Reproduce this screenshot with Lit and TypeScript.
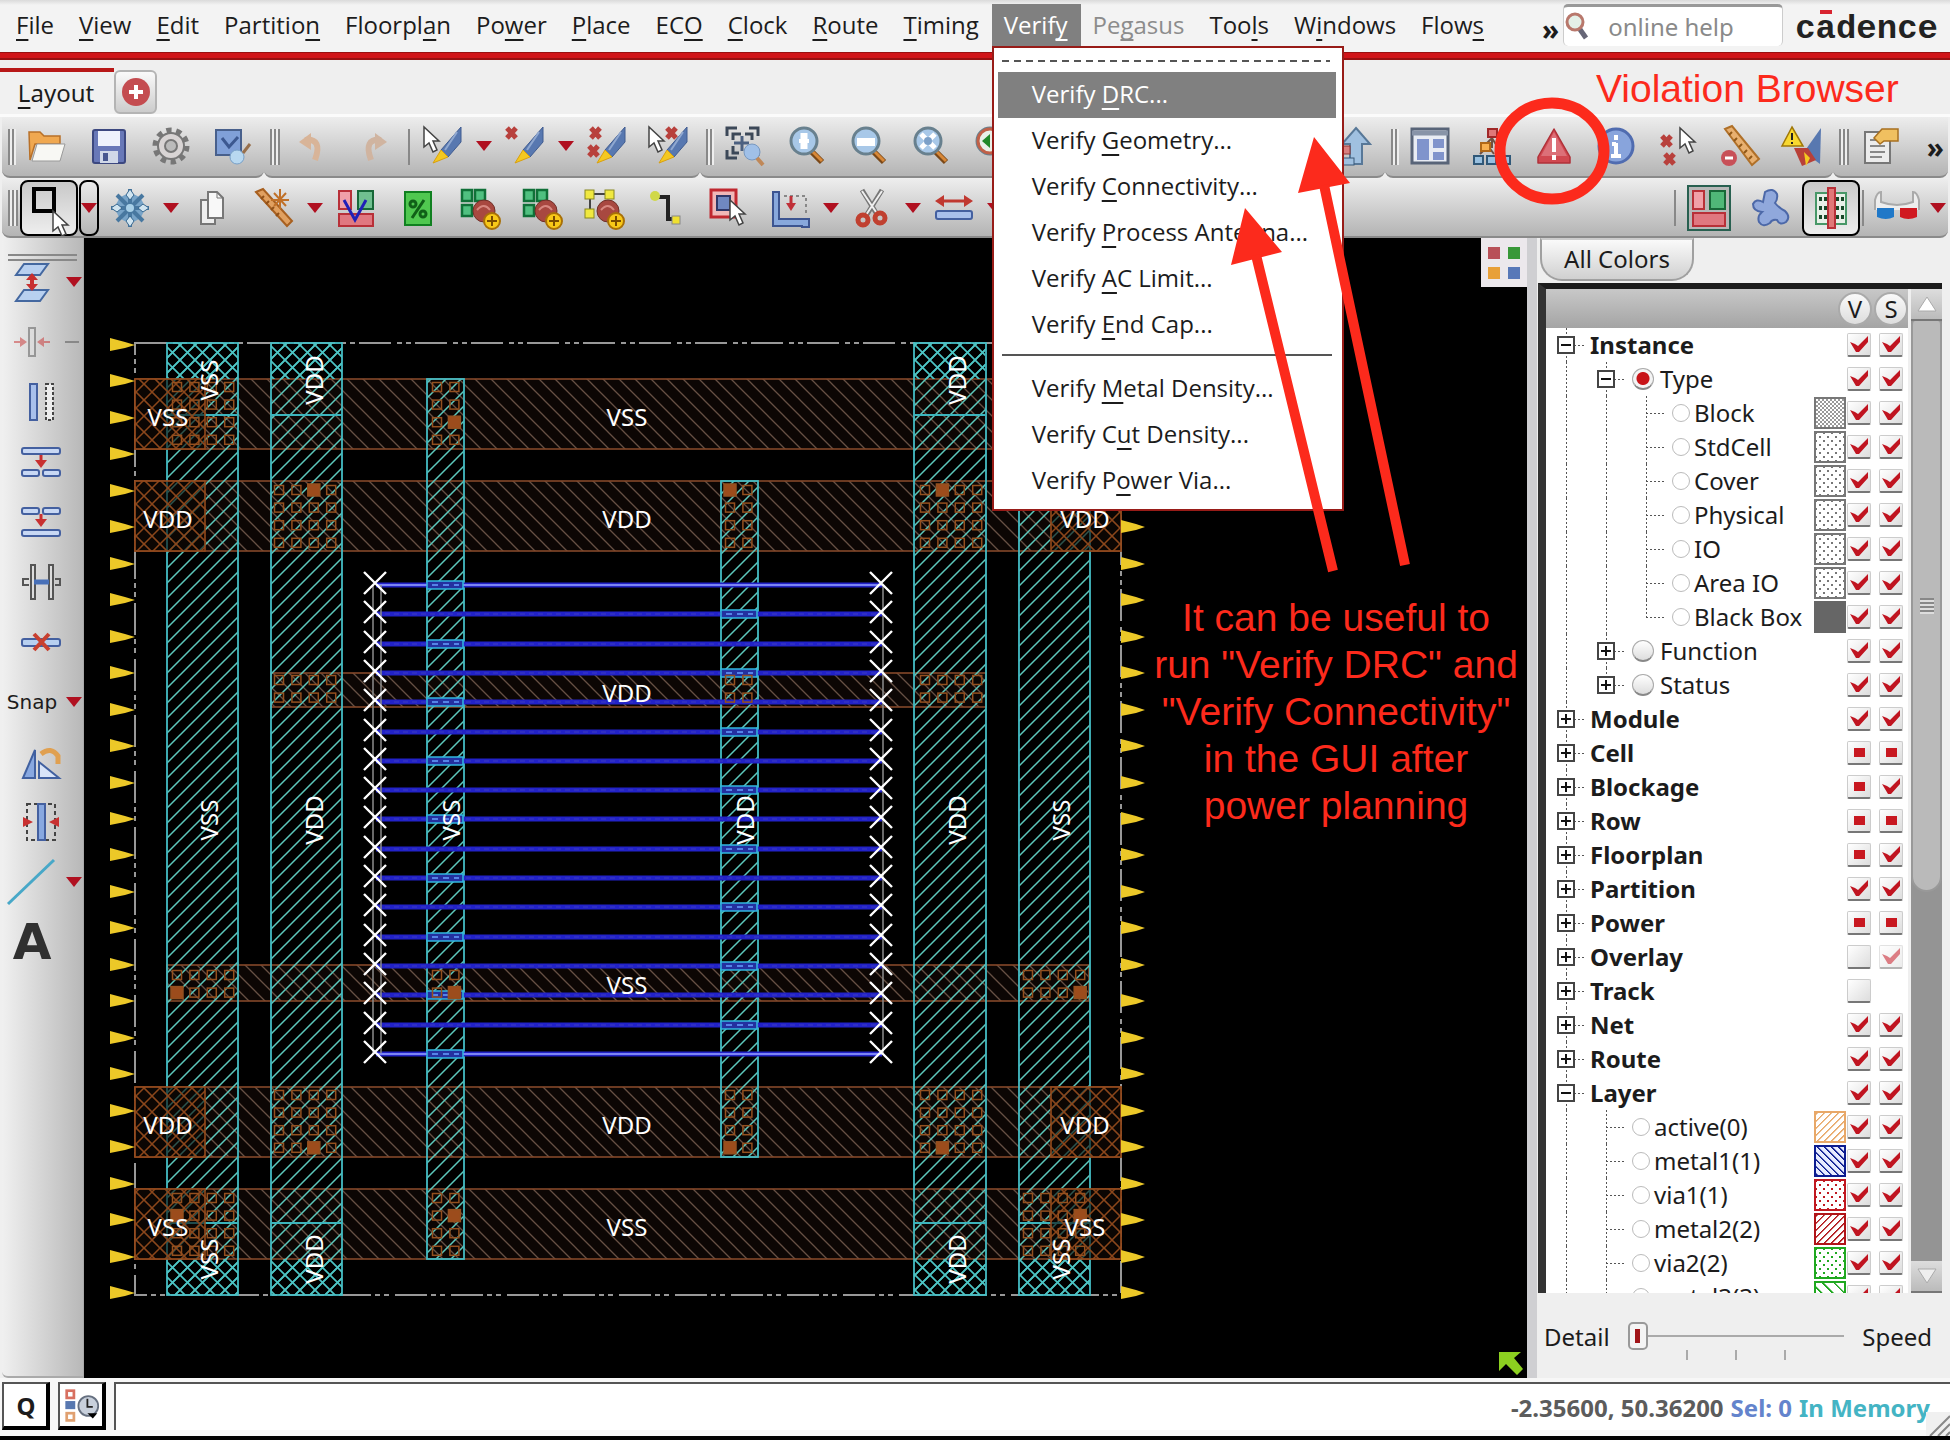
import { LitElement, html, svg, css, nothing } from "lit";
import type { SVGTemplateResult, TemplateResult } from "lit";
import { customElement, state } from "lit/decorators.js";
import { classMap } from "lit/directives/class-map.js";

/* ---------- data ---------- */

/** A "_" stands before the mnemonic letter. */
const MENUS = [
  "_File", "_View", "_Edit", "Partitio_n", "Floorpl_an", "Po_wer", "_Place", "EC_O",
  "_Clock", "_Route", "_Timing", "Verif_y", "Pe_gasus", "Too_ls", "W_indows", "Flow_s",
];

const VERIFY_TOP = [
  "Verify _DRC...", "Verify _Geometry...", "Verify _Connectivity...",
  "Verify _Process Antenna...", "Verify _AC Limit...", "Verify _End Cap...",
];
const VERIFY_BOTTOM = ["Verify _Metal Density...", "Verify C_ut Density...", "Verify P_ower Via..."];

type Mark = "on" | "part" | "off" | "dim" | "none";
type Guide = "line" | "open" | "shut" | "tee" | "end" | "last";
interface Row {
  label: string;
  guides: Guide[];
  radio?: "big" | "small";
  picked?: boolean;
  swatch?: string;
  v: Mark;
  s: Mark;
}

const top = (label: string, v: Mark, s: Mark, g: Guide = "shut"): Row => ({ label, guides: [g], v, s });
const kind = (label: string, swatch: string, g: Guide = "tee"): Row =>
  ({ label, guides: ["line", "line", g], radio: "small", swatch, v: "on", s: "on" });
const layer = (label: string, swatch: string): Row =>
  ({ label, guides: ["line", "tee"], radio: "small", swatch, v: "on", s: "on" });

const ROWS: Row[] = [
  top("Instance", "on", "on", "open"),
  { label: "Type", guides: ["line", "open"], radio: "big", picked: true, v: "on", s: "on" },
  kind("Block", "check"),
  kind("StdCell", "dots"),
  kind("Cover", "dots"),
  kind("Physical", "dots"),
  kind("IO", "dots"),
  kind("Area IO", "dots"),
  kind("Black Box", "solid", "end"),
  { label: "Function", guides: ["line", "shut"], radio: "big", v: "on", s: "on" },
  { label: "Status", guides: ["line", "last"], radio: "big", v: "on", s: "on" },
  top("Module", "on", "on"),
  top("Cell", "part", "part"),
  top("Blockage", "part", "on"),
  top("Row", "part", "part"),
  top("Floorplan", "part", "on"),
  top("Partition", "on", "on"),
  top("Power", "part", "part"),
  top("Overlay", "off", "dim"),
  top("Track", "off", "none"),
  top("Net", "on", "on"),
  top("Route", "on", "on"),
  top("Layer", "on", "on", "open"),
  layer("active(0)", "active"),
  layer("metal1(1)", "metal1"),
  layer("via1(1)", "via1"),
  layer("metal2(2)", "metal2"),
  layer("via2(2)", "via2"),
  layer("metal3(3)", "metal3"),
];

/* ---------- icons, drawn on a 40 x 40 grid ---------- */

const cursor = (x: number, y: number) => svg`
  <path transform="translate(${x} ${y})" d="M0 0V20L5 16L9 25L13 23L9 14H15Z" fill="#fff" stroke="#444" stroke-width="1.5"/>`;
const cross = (x: number, y: number) => svg`
  <path transform="translate(${x} ${y})" d="M2 2L11 12M11 2L2 12" stroke="#b8403c" stroke-width="5"/>`;
const marker = svg`
  <path d="M38 1L18 24L25 31L38 16Z" fill="#5878b0" stroke="#405c90"/>
  <path d="M34 6L22 24" stroke="#90a8d0" stroke-width="2"/>
  <path d="M18 24L25 31L10 37Z" fill="#f4c820" stroke="#d8a010"/>`;
const lens = (inner: SVGTemplateResult) => svg`
  <path d="M24 25L35 36" stroke="#7a4818" stroke-width="6"/>
  <path d="M25 25L35 35" stroke="#d88838" stroke-width="3"/>
  <circle cx="17" cy="15" r="13" fill="#a8c8e8" stroke="#68808e" stroke-width="3"/>${inner}`;
const blocks = svg`
  <g fill="#50c080" stroke="#107038" stroke-width="2.5">
    <rect x="2" y="2" width="10" height="11"/><rect x="15" y="2" width="10" height="11"/><rect x="2" y="17" width="10" height="11"/>
  </g>`;
const coin = svg`
  <circle cx="24" cy="23" r="11" fill="#a84840" stroke="#703028"/>
  <path d="M17 22q7-8 13 0" stroke="#d88880" stroke-width="2" fill="none"/>
  <circle cx="32" cy="33" r="8" fill="#f8c818" stroke="#a87008" stroke-width="2"/>
  <path d="M32 28v10M27 33h10" stroke="#7a4c00" stroke-width="2"/>`;

const ICONS: Record<string, SVGTemplateResult> = {
  open: svg`<path d="M2 6h11l4 4h16v8H8L3 34Z" fill="#f0a850" stroke="#b87028" stroke-width="1.5"/><path d="M10 18h28l-5 17H5Z" fill="#f8f8f4" stroke="#999"/>`,
  save: svg`<rect x="4" y="4" width="32" height="33" rx="2" fill="#6878b8" stroke="#3c4880" stroke-width="2"/><rect x="9" y="5" width="22" height="15" fill="#eef2fc"/><rect x="11" y="25" width="18" height="12" fill="#d0d8e8"/><rect x="14" y="27" width="5" height="8" fill="#485890"/>`,
  gear: svg`<circle cx="20" cy="20" r="15" fill="none" stroke="#777" stroke-width="7" stroke-dasharray="5 4.4"/><circle cx="20" cy="20" r="13" fill="#d8d4d4" stroke="#777" stroke-width="2"/><circle cx="20" cy="20" r="6" fill="#bbb" stroke="#777" stroke-width="2"/>`,
  image: svg`<rect x="3" y="4" width="25" height="25" fill="#80a0d8" stroke="#48608c" stroke-width="2"/><path d="M9 12l7 9 9-10" stroke="#3c5890" stroke-width="3" fill="none"/><circle cx="24" cy="31" r="7" fill="#b8d8f0" stroke="#78a0c8"/><path d="M30 27l7-9" stroke="#98704c" stroke-width="3"/>`,
  undo: svg`<path d="M12 14q18-2 10 20" stroke="#d8b498" stroke-width="6" fill="none"/><path d="M6 16L18 7V24Z" fill="#d8b498"/>`,
  redo: svg`<path d="M26 14q-18-2-10 20" stroke="#d0b4a0" stroke-width="6" fill="none"/><path d="M32 16L20 7V24Z" fill="#d0b4a0"/>`,
  hlCursor: svg`${marker}${cursor(1, 1)}`,
  hlCross: svg`${marker}${cross(0, 0)}`,
  hlCrosses: svg`${marker}${cross(2, 0)}${cross(0, 18)}`,
  hlCursorCross: svg`${marker}${cross(16, 0)}${cursor(0, 1)}`,
  zoomBox: svg`<path d="M2 10V2H12M24 2H33V10M33 24V30M12 32H2V24M8 14v-6h8M20 8h7v6M8 20v7h6" stroke="#3c4858" stroke-width="3" fill="none"/><path d="M17 10v15M9 17h15" stroke="#4c6080" stroke-width="3"/><circle cx="27" cy="26" r="8" fill="#a0c0e8" stroke="#7898c0"/><path d="M32 32l6 7" stroke="#c08858" stroke-width="4"/>`,
  zoomIn: lens(svg`<path d="M17 7v16" stroke="#fff" stroke-width="7"/><path d="M12 15h10" stroke="#fff" stroke-width="4"/>`),
  zoomOut: lens(svg`<path d="M8 16h18" stroke="#fff" stroke-width="8"/>`),
  zoomFit: lens(svg`<path d="M10 8l14 14M24 8L10 22" stroke="#fff" stroke-width="5"/><circle cx="17" cy="15" r="4" fill="#7ca0c8"/>`),
  zoomPrev: lens(svg`<circle cx="17" cy="15" r="12" fill="#e8f0e8" stroke="#c06048" stroke-width="3"/><path d="M9 15l8-7v14Z" fill="#208828"/>`),
  up: svg`<path d="M22 2L36 18H28V38H16V18H8Z" fill="#a0c0e0" stroke="#587898" stroke-width="2"/><rect x="6" y="20" width="10" height="8" fill="#d88080" stroke="#903838"/><rect x="8" y="32" width="12" height="7" fill="#a0c0e0" stroke="#385878"/>`,
  panes: svg`<rect x="2" y="3" width="36" height="34" fill="#e8ecf4" stroke="#586478" stroke-width="3"/><path d="M2 7h36" stroke="#8894a8" stroke-width="5"/><path d="M7 13h12v21H7ZM23 13h11v9H23ZM23 26h11v8H23Z" fill="#8094cc"/>`,
  tree: svg`<path d="M20 10v8M20 22v-5M10 22L20 12L31 30M8 28l8-8 6 8" stroke="#705040" fill="none" stroke-width="2"/><rect x="16" y="3" width="9" height="8" fill="#e07878" stroke="#a02828" stroke-width="2"/><rect x="9" y="17" width="9" height="8" fill="#f8b050" stroke="#b06818" stroke-width="2"/><g fill="#98c0e0" stroke="#305878" stroke-width="2"><rect x="2" y="30" width="9" height="8"/><rect x="15" y="30" width="9" height="8"/><rect x="29" y="30" width="9" height="8"/></g>`,
  warn: svg`<path d="M20 3L36 31V37H4V31Z" fill="#d04850" stroke="#b03038" stroke-width="1.5" stroke-linejoin="round"/><path d="M20 6L33 30H7Z" fill="#dc7078"/><path d="M20 12v14M20 29v5" stroke="#fff" stroke-width="4"/>`,
  info: svg`<circle cx="20" cy="20" r="17" fill="#88a4dc" stroke="#506cb0" stroke-width="3"/><path d="M20 9v5M20 17v13M15 30h10M16 18h4" stroke="#fff" stroke-width="4"/>`,
  crossCursor: svg`${cross(2, 8)}${cross(5, 26)}${cursor(22, 2)}`,
  ruler: svg`<path d="M5 3L12 0L39 33L32 39Z" fill="#e8b070" stroke="#b07028" stroke-width="2"/><path d="M12 6l-3 3M17 12l-3 3M22 18l-3 3M27 24l-3 3M32 30l-3 3" stroke="#905818" stroke-width="2"/><circle cx="9" cy="32" r="8" fill="#c85058"/><path d="M5 32h8" stroke="#fff" stroke-width="3"/>`,
  warnHl: svg`<path d="M39 2L22 26L38 38Z" fill="#5878b0"/><path d="M12 22l14 0 8 12-14 6Z" fill="#b84038"/><path d="M22 26l6 6-4 8Z" fill="#f4c820"/><path d="M10 1L21 20H0Z" fill="#f8d830" stroke="#a07808" stroke-width="1.5"/><path d="M10 7v7M10 16v2" stroke="#222" stroke-width="2"/>`,
  report: svg`<path d="M3 6h25v31H3Z" fill="#ececec" stroke="#777" stroke-width="2"/><path d="M8 14h10M8 20h15M8 26h15M8 31h12" stroke="#888" stroke-width="2"/><path d="M12 12l8-9h16v12H22l-4 3Z" fill="#f0c060" stroke="#a87020" stroke-width="1.5"/>`,
  flower: svg`<circle cx="20" cy="20" r="14" fill="#78a4c8"/><path d="M20 1v38M1 20h38M7 7l26 26M33 7L7 33" stroke="#4878a0" stroke-width="4"/><path d="M20 1l4 6-4 5-4-5ZM20 39l4-6-4-5-4 5ZM1 20l6 4 5-4-5-4ZM39 20l-6 4-5-4 5-4Z" fill="#d0e4f0" stroke="#386890"/><circle cx="20" cy="20" r="4" fill="#a8d0e8"/>`,
  copy: svg`<path d="M9 12h14v24H9Z" fill="#eee" stroke="#777" stroke-width="2"/><path d="M16 4h9l6 6v20H16Z" fill="#f8f8f8" stroke="#777" stroke-width="2"/><path d="M25 4v6h6" fill="none" stroke="#777"/>`,
  measure: svg`<path d="M2 4L9 1L38 33L33 38Z" fill="#e0a060" stroke="#a86020" stroke-width="2"/><path d="M10 8l-3 3M15 13l-3 3M20 19l-3 3M25 25l-3 3" stroke="#905018" stroke-width="2"/><path d="M26 1v20M17 12h18M20 5l12 13M32 5L20 18" stroke="#c07028" stroke-width="2"/>`,
  tiles: svg`<rect x="3" y="3" width="12" height="18" fill="#f0a0a8" stroke="#b83038" stroke-width="2"/><rect x="22" y="3" width="15" height="18" fill="#70c090" stroke="#186838" stroke-width="2"/><rect x="3" y="26" width="34" height="12" fill="#e07880" stroke="#b83038" stroke-width="2"/><path d="M8 12L19 32L30 12" stroke="#2020b8" stroke-width="3" fill="none"/>`,
  percent: svg`<rect x="7" y="4" width="26" height="33" fill="#50c850" stroke="#108020" stroke-width="2"/><path d="M26 12L14 30" stroke="#106018" stroke-width="3"/><g fill="none" stroke="#106018" stroke-width="3"><circle cx="15" cy="16" r="3"/><circle cx="25" cy="26" r="3"/></g>`,
  blockAdd: svg`${blocks}${coin}`,
  netAdd: svg`<path d="M7 6h22M6 7v20" stroke="#444" stroke-width="2"/><g fill="#f0e840" stroke="#888820"><rect x="1" y="2" width="9" height="9"/><rect x="21" y="2" width="9" height="9"/><rect x="1" y="21" width="9" height="9"/></g>${coin}`,
  wire: svg`<path d="M10 9h12v22h8" stroke="#222" stroke-width="4" fill="none"/><circle cx="9" cy="8" r="5" fill="#d0d848"/><rect x="26" y="28" width="8" height="8" fill="#f0e030" stroke="#888"/>`,
  boxCursor: svg`<rect x="3" y="2" width="25" height="27" fill="#f0b8b8" stroke="#c02830" stroke-width="3"/><rect x="9" y="8" width="13" height="14" fill="#7088c0" stroke="#303868" stroke-width="2"/>${cursor(22, 12)}`,
  align: svg`<path d="M3 4h6v27h30v8H32V38H3Z" fill="#88a8dc" stroke="#3c5490" stroke-width="2"/><path d="M14 8h22v18" stroke="#888" stroke-dasharray="3 3" stroke-width="2" fill="none"/><path d="M21 8v10" stroke="#c03038" stroke-width="3"/><path d="M16 15h10l-5 8Z" fill="#c03038"/>`,
  cut: svg`<path d="M10 2L26 28M30 2L14 28" stroke="#777" stroke-width="5"/><path d="M10 3L26 27M30 3L14 27" stroke="#eee" stroke-width="2"/><g fill="none" stroke="#c04030" stroke-width="5"><circle cx="11" cy="32" r="5"/><circle cx="28" cy="30" r="5"/></g>`,
  stretch: svg`<path d="M8 13h24" stroke="#c03830" stroke-width="3"/><path d="M1 13l9-6v12ZM39 13l-9-6v12Z" fill="#c03830"/><rect x="2" y="23" width="36" height="8" rx="2" fill="#a8c0ec" stroke="#4460a0" stroke-width="2"/>`,
  plan: svg`<rect x="-1" y="-2" width="42" height="44" fill="#b8b8b8" stroke="#286050" stroke-width="2"/><rect x="4" y="3" width="11" height="18" fill="#f0a0a8" stroke="#b83038" stroke-width="2"/><rect x="21" y="3" width="15" height="18" fill="#50b878" stroke="#186838" stroke-width="2"/><rect x="4" y="25" width="32" height="13" fill="#e07880" stroke="#b83038" stroke-width="2"/>`,
  blob: svg`<path d="M14 4q8-5 12 2q1 5-2 9q4 5 10 8q6 6 1 11q-6 4-9-2q-5-1-7 3q-7 5-11-1q-2-6 3-10q-9-1-9-8q3-6 10-2Z" fill="#90a8dc" stroke="#4c68a8" stroke-width="2"/>`,
  rows: svg`<rect x="5" y="5" width="30" height="31" fill="#e8f0e8" stroke="#489868" stroke-width="2"/><path d="M8 11h8M25 11h8M8 20h8M25 20h8M8 29h8M25 29h8" stroke="#184828" stroke-width="4" stroke-dasharray="3 2"/><rect x="17" y="0" width="7" height="40" fill="#e07878" stroke="#b83038" stroke-width="2"/>`,
  glasses: svg`<path d="M-2 22V12q2-8 6-8v10q16 6 32 0V4q4 0 6 8v10" fill="#eee" stroke="#aaa" stroke-width="2"/><path d="M0 20h17v9q-8 4-17 0Z" fill="#2078c8"/><path d="M23 20h17v9q-9 4-17 0Z" fill="#d01820"/>`,
  layers: svg`<path d="M12 2H36L28 13H4ZM12 28H36L28 39H4Z" fill="#b8d0f0" stroke="#4468a0" stroke-width="2"/><path d="M20 13v14" stroke="#c83030" stroke-width="4"/><path d="M14 18l6-7 6 7ZM14 22l6 7 6-7Z" fill="#c83030"/>`,
  squeeze: svg`<g opacity=".5"><rect x="17" y="6" width="6" height="28" fill="#ddd" stroke="#555" stroke-width="2"/><path d="M2 20h9M38 20h-9" stroke="#c83030" stroke-width="2"/><path d="M8 15l7 5-7 5ZM32 15l-7 5 7 5Z" fill="#c83030"/></g>`,
  mirror: svg`<rect x="9" y="2" width="7" height="36" fill="#a8c0ec" stroke="#4460a0" stroke-width="2"/><rect x="25" y="2" width="7" height="36" fill="#eee" stroke="#444" stroke-width="2" stroke-dasharray="3 2"/>`,
  split: svg`<g fill="#c8d8f4" stroke="#4460a0" stroke-width="2"><rect x="1" y="6" width="38" height="6" rx="2"/><rect x="1" y="28" width="17" height="6" rx="2"/><rect x="22" y="28" width="17" height="6" rx="2"/></g><path d="M20 13v6" stroke="#c83030" stroke-width="3"/><path d="M14 18h12l-6 8Z" fill="#c83030"/>`,
  merge: svg`<g fill="#c8d8f4" stroke="#4460a0" stroke-width="2"><rect x="1" y="6" width="17" height="6" rx="2"/><rect x="22" y="6" width="17" height="6" rx="2"/><rect x="1" y="28" width="38" height="6" rx="2"/></g><path d="M20 12v6" stroke="#c83030" stroke-width="3"/><path d="M14 17h12l-6 8Z" fill="#c83030"/>`,
  bridge: svg`<path d="M8 17H2v6h6M34 17h5v6h-5" stroke="#555" fill="none" stroke-width="2"/><rect x="10" y="3" width="4" height="34" fill="#ddd" stroke="#555" stroke-width="2"/><rect x="28" y="3" width="4" height="34" fill="#ddd" stroke="#555" stroke-width="2"/><path d="M13 20h15" stroke="#4870b8" stroke-width="5"/>`,
  cutWire: svg`<rect x="1" y="17" width="38" height="7" rx="2" fill="#b8d0f0" stroke="#4460a0" stroke-width="2"/><path d="M13 12L28 28M28 12L13 28" stroke="#c84030" stroke-width="4"/>`,
  flip: svg`<path d="M2 36L14 8V36Z" fill="#88a8e0" stroke="#4060a0" stroke-width="2"/><path d="M18 20V36H38Z" fill="#d8e4f8" stroke="#4060a0" stroke-width="2"/><path d="M20 12q10-8 17 2v8" stroke="#e0a050" stroke-width="5" fill="none"/>`,
  fitCell: svg`<rect x="6" y="2" width="28" height="36" fill="none" stroke="#444" stroke-width="2" stroke-dasharray="4 3"/><rect x="17" y="2" width="7" height="36" fill="#88a8e0" stroke="#4460a0" stroke-width="2"/><path d="M2 15l10 5-10 5ZM38 15l-10 5 10 5Z" fill="#c83030"/>`,
  line: svg`<path d="M-4 42L42 -2" stroke="#48a8c8" stroke-width="3"/>`,
  pick: svg`<rect x="5" y="1" width="20" height="22" fill="none" stroke="#000" stroke-width="4"/>${cursor(24, 23)}`,
  clock: svg`<g stroke-width="3" fill="#fff"><rect x="3" y="3" width="8" height="8" stroke="#d87060"/><rect x="3" y="16" width="8" height="6" fill="#5878b0" stroke="#5878b0"/><rect x="3" y="28" width="8" height="8" stroke="#e0a070"/></g><circle cx="27" cy="20" r="11" fill="#c8d0dc" stroke="#667080" stroke-width="2"/><path d="M26 12v9h6" stroke="#222" stroke-width="2" fill="none"/><path d="M26 28h11l-5 6Z" fill="#000"/>`,
};

const icon = (name: string) => html`<svg class="icon" viewBox="0 0 40 40" aria-hidden="true">${ICONS[name]}</svg>`;

/* ---------- die drawing ---------- */

const range = (n: number) => Array.from({ length: n }, (_, i) => i);

const H_BANDS = [
  [135, 379, 986, 70], [135, 481, 986, 70], [271, 673, 715, 34],
  [167, 965, 922, 36], [135, 1087, 986, 70], [135, 1189, 986, 70],
];
const V_BANDS = [
  [167, 343, 71, 952], [271, 343, 71, 952], [427, 379, 37, 880],
  [721, 481, 37, 676], [914, 343, 72, 952], [1019, 343, 71, 952],
];
/* left, top, columns, rows, filled column, filled row */
const VIAS = [
  [177, 387, 4, 4, -1, -1], [437, 387, 2, 4, 1, 2], [279, 490, 4, 4, 2, 0], [730, 490, 2, 4, 0, 0],
  [925, 490, 4, 4, 1, 0], [279, 680, 4, 2, -1, -1], [730, 680, 2, 2, -1, -1], [925, 680, 4, 2, -1, -1],
  [177, 975, 4, 2, 0, 1], [437, 975, 2, 2, 1, 1], [1028, 975, 4, 2, 3, 1], [279, 1095, 4, 4, 2, 3],
  [730, 1095, 2, 4, 0, 3], [925, 1095, 4, 4, 1, 3], [177, 1198, 4, 4, 0, 1], [437, 1198, 2, 4, 1, 1],
  [1028, 1198, 4, 4, 3, 1],
];
const H_NAMES: [string, number, number][] = [
  ["VSS", 168, 426], ["VDD", 168, 528], ["VDD", 168, 1134], ["VSS", 168, 1236],
  ["VSS", 627, 426], ["VDD", 627, 528], ["VDD", 627, 702], ["VSS", 627, 994], ["VDD", 627, 1134], ["VSS", 627, 1236],
  ["VDD", 1085, 528], ["VDD", 1085, 1134], ["VSS", 1085, 1236],
];
const V_NAMES: [string, number, number][] = [
  ["VSS", 218, 380], ["VDD", 323, 380], ["VDD", 966, 380],
  ["VSS", 218, 820], ["VDD", 323, 820], ["VSS", 460, 820], ["VDD", 754, 820], ["VDD", 966, 820], ["VSS", 1070, 820],
  ["VSS", 218, 1259], ["VDD", 323, 1259], ["VDD", 966, 1259], ["VSS", 1070, 1259],
];

const vias = ([x, y, nx, ny, fx, fy]: number[]) =>
  range(nx * ny).map((k) => {
    const c = k % nx;
    const r = Math.floor(k / nx);
    const full = c === fx && r === fy;
    const h = full ? 6 : 4.5;
    return svg`<rect x=${x + c * 17.4 - h} y=${y + r * 17.6 - h} width=${h * 2} height=${h * 2}
      fill=${full ? "#9c4c1c" : "none"} stroke="#94501f" stroke-width="1.5"/>`;
  });

const dieDrawing = () => svg`
  <defs>
    <pattern id="cy" width="15" height="15" patternUnits="userSpaceOnUse">
      <path d="M-1 16L16 -1M-2 2L2 -2M13 17L17 13" stroke="#5cc8bc" stroke-width="1.5"/>
    </pattern>
    <pattern id="cyx" width="15" height="15" patternUnits="userSpaceOnUse">
      <path d="M-1 16L16 -1M-1 -1L16 16" stroke="#4cc4c4" stroke-width="1.7"/>
    </pattern>
    <pattern id="br" width="16" height="16" patternUnits="userSpaceOnUse">
      <path d="M-1 -1L17 17M14 -2L18 2M-2 14L2 18" stroke="#665044" stroke-width="1.3"/>
    </pattern>
    <pattern id="brx" width="16" height="16" patternUnits="userSpaceOnUse">
      <path d="M-1 17L17 -1M-1 -1L17 17" stroke="#8c461a" stroke-width="1.5"/>
    </pattern>
  </defs>
  <g transform="translate(-84 -238)">
    <rect x="135" y="343" width="986" height="952" fill="none" stroke="#989898" stroke-width="2" stroke-dasharray="32 6 5 4 5 4"/>
    ${H_BANDS.map(([x, y, w, h]) => svg`
      <rect x=${x} y=${y} width=${w} height=${h} fill="#0c0604"/>
      <rect x=${x} y=${y} width=${w} height=${h} fill="url(#br)" stroke="#84482a" stroke-width="1.6"/>`)}
    ${V_BANDS.map(([x, y, w, h]) => svg`<rect x=${x} y=${y} width=${w} height=${h} fill="url(#cy)" stroke="#44bcc4" stroke-width="1.8"/>`)}
    ${[167, 271, 914, 1019].map((x) => svg`
      <rect x=${x} y="343" width="71" height="36" fill="url(#cyx)"/>
      <rect x=${x} y="1259" width="71" height="36" fill="url(#cyx)"/>
      <path d="M${x} 415h71M${x} 1223h71" stroke="#3cb4bc" stroke-width="2"/>`)}
    ${[135, 1051].map((x) => [379, 481, 1087, 1189].map((y) => svg`
      <rect x=${x} y=${y} width="70" height="70" fill="#0c0604" fill-opacity=".6"/>
      <rect x=${x} y=${y} width="70" height="70" fill="url(#brx)" stroke="#944a1c" stroke-width="1.6"/>`))}
    ${range(17).map((i) => {
      const y = Math.round(585 + i * 29.3);
      const edge = i === 0 || i === 16;
      const x = i % 2 ? 721 : 427;
      return svg`
        <path d="M376 ${y}H882" stroke="#2222c8" stroke-width="5"/>
        ${edge
          ? svg`<path d="M376 ${y}H882" stroke="#7c84f4" stroke-width="2"/>`
          : svg`<path d="M376 ${y}H882" stroke="#3c3cc0" stroke-width="1" stroke-dasharray="5 4"/>`}
        <rect x=${x} y=${y - 4} width="36" height="8" fill="#2430a0" stroke="#30b8e0" stroke-width="1.5"/>
        <path d="M${x + 5} ${y}h27" stroke="#5484e8" stroke-width="2" stroke-dasharray="6 5"/>`;
    })}
    ${VIAS.map(vias)}
    <path d="M373 585V1053M381 585V1053M883 585V1053" stroke="#8c8c8c" stroke-width="1.5"/>
    ${range(17).map((i) => {
      const y = Math.round(583 + i * 29.3);
      return svg`<path d="M364 ${y - 11}L386 ${y + 11}M386 ${y - 11}L364 ${y + 11}M870 ${y - 11}L892 ${y + 11}M892 ${y - 11}L870 ${y + 11}"
        stroke="#fff" stroke-width="2.4"/>`;
    })}
    ${range(27).map((i) => {
      const y = Math.round(345 + i * 36.46);
      return svg`<path d="M110 ${y - 7}L125 ${y - 3}L135 ${y}L125 ${y + 3}L110 ${y + 6}ZM1121 ${y - 7}L1136 ${y - 3}L1145 ${y}L1136 ${y + 3}L1121 ${y + 6}Z" fill="#ecc828"/>`;
    })}
    <g class="net">
      ${H_NAMES.map(([t, x, y]) => svg`<text x=${x} y=${y}>${t}</text>`)}
      ${V_NAMES.map(([t, x, y]) => svg`<text transform="translate(${x} ${y}) rotate(-90)">${t}</text>`)}
    </g>
  </g>`;

/* ---------- application ---------- */

@customElement("app-root")
export class AppRoot extends LitElement {
  @state() private detail = 0;

  static styles = css`
    :host {
      display: flex;
      flex-direction: column;
      position: relative;
      height: 100vh;
      overflow: hidden;
      background: #efefef;
      color: #1c1c1c;
      font: 24px/34px "Noto Sans", "Open Sans", sans-serif;
    }
    * { box-sizing: border-box; }
    button, input { font: inherit; color: inherit; margin: 0; padding: 0; border: 0; background: none; }
    u { text-decoration-thickness: 2px; text-underline-offset: 5px; text-decoration-skip-ink: none; }
    .icon { width: 40px; height: 40px; overflow: visible; flex: none; fill: none; }

    .menubar { display: flex; height: 52px; padding: 4px 12px 6px 4px; background: linear-gradient(#dadada, #f3f3f3 5px, #f3f3f3); }
    .menus { display: flex; font-family: "Open Sans", "Noto Sans", sans-serif; }
    .menu { position: relative; display: flex; }
    .menu > button { padding: 0 13px 0 12px; white-space: nowrap; }
    .menu.open { background: #808080; color: #fff; }
    .menu.grey { color: #8c8c8c; }
    .chev { padding: 8px 0 0; margin-left: auto; font-weight: 700; font-size: 28px; }
    .search { display: flex; align-items: center; width: 220px; margin: 0 12px 0 4px; background: #fff; border-top: 3px solid #999; border-right: 1px solid #ccc; border-left: 1px solid #ccc; border-radius: 5px; }
    .search input { width: 100%; padding-left: 18px; outline: 0; }
    .search input::placeholder { color: #8a8a8a; opacity: 1; }
    .search svg { width: 26px; height: 32px; flex: none; }
    .brand { font: 700 34px/50px "Liberation Mono", monospace; color: #222; }
    .brand .bar { position: relative; }
    .brand .bar::after { content: ""; position: absolute; left: 4px; right: 4px; top: 0; height: 4px; background: #d82430; }

    .popup { position: absolute; z-index: 5; top: 42px; left: 0; width: 352px; padding: 8px 6px 5px 4px; background: #fff; border: 2px solid #981c18; color: #1c1c1c; }
    .tear { height: 4px; margin: 4px 6px 8px 4px; background: repeating-linear-gradient(90deg, #555 0 7px, transparent 7px 12px) 0 0 / 100% 2px no-repeat; }
    .popup button { display: block; width: 100%; height: 46px; padding: 0 0 2px 34px; text-align: left; white-space: nowrap; }
    .popup button.hot { background: #808080; color: #fff; }
    .popup hr { height: 2px; margin: 6px 4px 10px; border: 0; background: #555; }

    .redline { height: 8px; background: #d01418; border: solid #981010; border-width: 1px 0 2px; }
    .tabs { display: flex; height: 57px; padding-top: 8px; border-bottom: 3px solid #fbfbfb; }
    .tab { width: 114px; padding: 0 2px 0 0; border-top: 4px solid #b81818; background: #f1f1f1; }
    .add { width: 43px; margin: 2px 0 0; border: 2px solid #b4b4b4; border-radius: 6px; background: linear-gradient(#fafafa, #ccc); display: grid; place-items: center; }
    .add svg { width: 30px; height: 30px; }

    .bar1, .bar2 { display: flex; height: 61px; padding: 0 2px; }
    .bar2 { height: 60px; padding-top: 1px; }
    .group { display: flex; align-items: center; background: linear-gradient(#ededed, #b4b4b4); border-bottom: 2px solid #8a8a8a; border-radius: 0 0 8px 8px; }
    .bar1 .tool, .bar1 .drop { margin-bottom: 2px; }
    .group.wide { flex: 1; overflow: hidden; }
    .grip { flex: none; width: 14px; height: 36px; background: repeating-linear-gradient(90deg, #888 0 2px, #eee 2px 4px) 6px 0 / 10px 100% no-repeat; }
    .grip.big { width: 18px; }
    .tool { flex: none; width: 62px; height: 56px; display: grid; place-items: center; }
    .tool.framed { width: 58px; border: 2px solid #000; border-radius: 8px; background: linear-gradient(#c8c8c8, #eee); }
    .drop { flex: none; width: 20px; height: 56px; display: grid; place-items: center; }
    .drop::after { content: ""; border: solid transparent; border-width: 10px 8px 0; border-top-color: #b01020; }
    .drop.framed { border: 2px solid #000; border-radius: 8px; margin: 0 0 0 1px; }
    .sep { flex: none; width: 2px; height: 36px; margin: 0 2px; background: #888; }
    .push { margin-left: auto; }
    .more { padding: 0 4px 0 14px; font-weight: 700; font-size: 28px; }

    .main { display: flex; flex: 1; min-height: 0; }
    .side { width: 82px; margin-left: 2px; flex: none; padding-top: 16px; background: linear-gradient(90deg, #f0f0f0, #b8b8b8); border: solid #aaa; border-width: 0 1px 2px 0; border-radius: 0 0 0 6px; }
    .handle { height: 7px; margin: 0 6px; border: solid #888; border-width: 2px 0; }
    .side .line { display: grid; grid-template-columns: 60px 20px; height: 60px; align-items: center; }
    .side .line.first { margin-top: -9px; }
    .side .tool, .side .drop { height: 60px; width: auto; }
    .side .drop { padding-left: 4px; }
    .side .tool { padding-left: 18px; }
    .side .tool.near { padding-left: 0; }
    .side .snap { padding: 0; font: 20px "DejaVu Sans", sans-serif; }
    .side .big { padding: 0; font: 900 50px/50px "DejaVu Sans", sans-serif; color: #303030; }
    .dash { height: 2px; width: 14px; background: #888; justify-self: center; }

    .die { position: relative; flex: 1; min-width: 0; background: #000; overflow: hidden; }
    .die > .plot { display: block; width: 100%; height: 100%; }
    .net text { font: 24px "Noto Sans", sans-serif; fill: #fff; text-anchor: middle; }
    .palette { position: absolute; right: 0; top: 0; width: 46px; height: 49px; background: #ece8ec; display: grid; place-items: center; }
    .palette svg { width: 32px; height: 36px; }
    .corner { position: absolute; right: 4px; bottom: 3px; width: 26px; height: 24px; }

    .panel { flex: none; width: 423px; display: flex; flex-direction: column; padding-left: 1px; border-left: 10px solid #cfcfd2; }
    .allcolors { align-self: flex-start; width: 154px; height: 43px; margin: 0 0 2px 2px; padding-bottom: 2px; border: 2px solid #a0a0a0; border-top-color: #ccc; border-radius: 0 0 22px 22px; background: linear-gradient(#fafafa, #d0d0d0); }
    .frame { display: flex; flex: 1; min-height: 0; margin-right: 8px; border: solid #1c1c1c; border-width: 6px 0 0 8px; border-left-color: #333; overflow: hidden; }
    .tree { flex: 1; min-width: 0; background: #fff; overflow: hidden; }
    .thead { display: flex; justify-content: flex-end; align-items: center; height: 39px; background: linear-gradient(#c8c8c8, #a4a4a4); }
    .thead button { width: 34px; height: 34px; margin-left: 2px; border: 2px solid #aaa; border-radius: 50%; background: linear-gradient(#fafafa, #ddd); line-height: 28px; }
    .row { display: flex; align-items: center; height: 34px; padding-right: 5px; white-space: nowrap; }
    .row label { padding-left: 4px; flex: 1; }
    .row.strong label { font-weight: 700; }
    .guide { flex: none; width: 40px; height: 34px; display: grid; place-items: center;
      --v: repeating-linear-gradient(#555 0 2px, transparent 2px 4px);
      --h: repeating-linear-gradient(90deg, #555 0 2px, transparent 2px 4px);
      background: var(--v) 20px 0 / 1px 34px no-repeat; }
    .guide.tee, .guide.open, .guide.shut { background: var(--v) 20px 0 / 1px 34px no-repeat, var(--h) 20px 17px / 18px 1px no-repeat; }
    .guide.end, .guide.last { background: var(--v) 20px 0 / 1px 17px no-repeat, var(--h) 20px 17px / 18px 1px no-repeat; }
    .toggle { width: 18px; height: 18px; border: 2px solid #444;
      background: linear-gradient(#111, #111) center / 10px 2px no-repeat, #fff; }
    .toggle.plus { background: linear-gradient(#111, #111) center / 10px 2px no-repeat, linear-gradient(#111, #111) center / 2px 10px no-repeat, #fff; }
    .radio { appearance: none; flex: none; width: 18px; height: 18px; margin-left: 6px; border: 1px solid #bbb; border-radius: 50%; background: #fff; }
    .radio.big { width: 22px; height: 22px; border-color: #aaa; border-bottom: 2px solid #888; background: linear-gradient(#fff, #ddd); }
    .radio.big + label { padding-left: 6px; }
    .radio.big:checked { background: radial-gradient(circle, #c81418 0 6px, #f4f4f4 7px); }
    .swatch { flex: none; width: 32px; height: 32px; border: 2px solid var(--c, #777); }
    .check-s { background: repeating-conic-gradient(#999 0 25%, #fff 0 50%) 0 0 / 4px 4px; }
    .dots-s, .via1-s, .via2-s { background: radial-gradient(circle, var(--c, #777) 0 1px, transparent 1px) 0 0 / 8px 8px, radial-gradient(circle, var(--c, #777) 0 1px, transparent 1px) 4px 4px / 8px 8px, #fff; }
    .solid-s { background: #666; border-color: #666; }
    .active-s { --c: #e8a868; background: repeating-linear-gradient(135deg, var(--c) 0 1px, #fff 2px 5px); }
    .metal1-s { --c: #0c1c90; background: repeating-linear-gradient(45deg, var(--c) 0 1px, #e8ecff 2px 5px); }
    .via1-s { --c: #c01820; }
    .metal2-s { --c: #b01418; background: repeating-linear-gradient(135deg, var(--c) 0 1px, #fff 2px 5px); }
    .via2-s { --c: #20a820; }
    .metal3-s { --c: #20a820; background: repeating-linear-gradient(45deg, var(--c) 0 1px, #fff 2px 8px); }
    .cell { flex: none; width: 24px; height: 24px; margin-left: 1px; display: grid; }
    .cell + .cell { margin-left: 8px; }
    .cell > * { grid-area: 1 / 1; }
    .cell input { appearance: none; width: 24px; height: 24px; background: linear-gradient(135deg, #fff, #ddd); border: 1px solid #ccc; border-bottom: 2px solid #777; border-radius: 2px; }
    .cell input:indeterminate { background: linear-gradient(#c81820, #c81820) center / 11px 9px no-repeat, linear-gradient(135deg, #fff, #ddd); }
    .cell svg { width: 24px; height: 24px; pointer-events: none; }
    .cell.dim { opacity: .55; }

    .scroll { flex: none; width: 31px; margin-left: 3px; display: flex; flex-direction: column; background: #949494; }
    .scroll button { height: 32px; display: grid; place-items: center; background: linear-gradient(#ddd, #bbb); border-bottom: 2px solid #777; }
    .scroll .grow { flex: 569; border: solid #999; border-width: 0 2px 2px; border-radius: 4px 4px 16px 16px; background: #bababa; display: grid; place-items: center; }
    .scroll .rest { flex: 369; }
    .ribs { width: 14px; height: 16px; background: repeating-linear-gradient(#888 0 2px, #ddd 2px 4px); }

    .level { display: flex; height: 85px; padding: 3px 18px 0 6px; align-items: center; justify-content: space-between; }
    .slide { display: grid; width: 216px; padding-top: 8px; }
    .slide input { appearance: none; width: 216px; height: 28px; background: linear-gradient(#aaa, #aaa) center / 100% 2px no-repeat; }
    .slide input::-webkit-slider-thumb { appearance: none; width: 20px; height: 28px; border: 2px solid #999; border-radius: 5px; background: linear-gradient(#a01418, #a01418) center / 5px 14px no-repeat, #f4f4f4; }
    .ticks { display: flex; justify-content: space-between; height: 10px; padding: 0 58px; }
    .ticks i { width: 2px; background: #aaa; }

    .status { display: flex; flex: none; height: 62px; padding: 4px 0 4px 2px; background: #f7f7f7; border-bottom: 4px solid #000; }
    .status button { width: 48px; height: 48px; margin-right: 8px; padding: 2px 0 0 2px; background: #fff; border: solid #555; border-width: 2px 4px 4px 2px; border-right-color: #000; border-bottom-color: #000; font-weight: 700; display: grid; place-items: center; }
    .status .icon { width: 36px; height: 36px; }
    .readout { flex: 1; display: flex; justify-content: flex-end; align-items: center; gap: 7px; padding: 2px 20px 0 0; background: #fff; border: solid #555; border-width: 2px 0 0 2px; font-weight: 700; color: #5c5c5c; margin-bottom: 2px; }
    .sel { color: #6484cc; }
    .mem { color: #44b4c4; }
    .sizer { position: absolute; right: 0; bottom: 4px; width: 24px; height: 24px; }

    .notes { position: absolute; inset: 0; z-index: 9; width: 100%; height: 100%; pointer-events: none; fill: #fc2a1c; }
    .notes text { font: 39px "Liberation Sans", Arial, sans-serif; }
    .notes .mid { text-anchor: middle; }
  `;

  private mnemonic(text: string): TemplateResult {
    const i = text.indexOf("_");
    return html`${text.slice(0, i)}<u>${text[i + 1]}</u>${text.slice(i + 2)}`;
  }

  private tool(name: string, label: string, extra = ""): TemplateResult {
    return html`<button class="tool ${extra}" aria-label=${label}>${icon(name)}</button>`;
  }

  private drop(label: string, extra = ""): TemplateResult {
    return html`<button class="drop ${extra}" aria-label=${label}></button>`;
  }

  private renderPopup() {
    return html`<div class="popup" role="menu">
      <div class="tear"></div>
      ${VERIFY_TOP.map((t, i) => html`<button role="menuitem" class=${classMap({ hot: i === 0 })}>${this.mnemonic(t)}</button>`)}
      <hr />
      ${VERIFY_BOTTOM.map((t) => html`<button role="menuitem">${this.mnemonic(t)}</button>`)}
    </div>`;
  }

  private renderMenubar() {
    return html`<header class="menubar">
      <nav class="menus">
        ${MENUS.map((m) => {
          const open = m === "Verif_y";
          const grey = m === "Pe_gasus";
          return html`<div class=${classMap({ menu: true, open, grey })}>
            <button ?disabled=${grey}>${this.mnemonic(m)}</button>
            ${open ? this.renderPopup() : nothing}
          </div>`;
        })}
      </nav>
      <button class="chev" aria-label="More menus">»</button>
      <label class="search">
        <svg viewBox="0 0 26 32" aria-hidden="true">
          <path d="M15 17L22 27" stroke="#667" stroke-width="5"/>
          <circle cx="11" cy="11" r="8" fill="#e4f0e8" stroke="#b8786c" stroke-width="3"/>
        </svg>
        <input type="text" placeholder="online help" aria-label="online help" />
      </label>
      <div class="brand">c<span class="bar">a</span>dence</div>
    </header>`;
  }

  private renderToolbars() {
    return html`
      <div class="bar1" role="toolbar" aria-label="Main">
        <div class="group">
          <span class="grip"></span>
          ${this.tool("open", "Open")}${this.tool("save", "Save")}${this.tool("gear", "Preferences")}${this.tool("image", "Snapshot")}
        </div>
        <div class="group">
          <span class="grip big"></span>
          ${this.tool("undo", "Undo")}${this.tool("redo", "Redo")}<span class="sep"></span>
          ${this.tool("hlCursor", "Highlight selected")}${this.drop("Highlight colors")}
          ${this.tool("hlCross", "Clear highlight")}${this.drop("Clear options")}
          ${this.tool("hlCrosses", "Clear all highlights")}${this.tool("hlCursorCross", "Clear selected highlight")}
        </div>
        <div class="group wide">
          <span class="grip"></span>
          ${this.tool("zoomBox", "Zoom area")}${this.tool("zoomIn", "Zoom in")}${this.tool("zoomOut", "Zoom out")}
          ${this.tool("zoomFit", "Fit")}${this.tool("zoomPrev", "Previous view")}${this.tool("up", "Ascend", "push")}
        </div>
        <div class="group">
          <span class="grip"></span>
          ${this.tool("panes", "Workspace")}${this.tool("tree", "Design browser")}${this.tool("warn", "Violation browser")}
          ${this.tool("info", "Summary")}${this.tool("crossCursor", "Deselect")}${this.tool("ruler", "Clear rulers")}
          ${this.tool("warnHl", "Clear violations")}
        </div>
        <div class="group">
          <span class="grip big"></span>
          ${this.tool("report", "Report")}
          <button class="more" aria-label="More tools">»</button>
        </div>
      </div>
      <div class="bar2" role="toolbar" aria-label="Edit">
        <div class="group wide">
          <span class="grip big"></span>
          ${this.tool("pick", "Select", "framed")}${this.drop("Select options", "framed")}
          ${this.tool("flower", "Move")}${this.drop("Move options")}${this.tool("copy", "Copy")}
          ${this.tool("measure", "Ruler")}${this.drop("Ruler options")}${this.tool("tiles", "Partition view")}
          ${this.tool("percent", "Density")}${this.tool("blockAdd", "Add block")}${this.tool("blockAdd", "Add cell")}
          ${this.tool("netAdd", "Add net")}${this.tool("wire", "Wire")}${this.tool("boxCursor", "Attribute")}
          ${this.tool("align", "Align")}${this.drop("Align options")}${this.tool("cut", "Cut")}${this.drop("Cut options")}
          ${this.tool("stretch", "Stretch")}${this.drop("Stretch options")}
          <span class="sep push"></span>
          ${this.tool("plan", "Floorplan view")}${this.tool("blob", "Amoeba view")}
          ${this.tool("rows", "Physical view", "framed")}<span class="sep"></span>
          ${this.tool("glasses", "Visibility")}${this.drop("Visibility options")}
        </div>
      </div>`;
  }

  private renderSide() {
    const line = (name: string, label: string, tail: TemplateResult | typeof nothing = nothing, near = "") =>
      html`<div class="line">${this.tool(name, label, near)}${tail}</div>`;
    return html`<aside class="side" role="toolbar" aria-label="Wire edit">
      <div class="handle"></div>
      <div class="line first">${this.tool("layers", "Change layer", "near")}${this.drop("Layer options")}</div>
      ${line("squeeze", "Compact", html`<span class="dash"></span>`, "near")}
      ${line("mirror", "Duplicate")}${line("split", "Split wire")}${line("merge", "Merge wire")}
      ${line("bridge", "Trim wire")}${line("cutWire", "Delete wire")}
      <div class="line"><button class="snap">Snap</button>${this.drop("Snap options")}</div>
      ${line("flip", "Flip")}${line("fitCell", "Fit cell")}
      ${line("line", "Draw line", this.drop("Line options"), "near")}
      <div class="line"><button class="big" aria-label="Add text">A</button></div>
    </aside>`;
  }

  private renderMark(m: Mark, name: string) {
    if (m === "none") return html`<span class="cell"></span>`;
    const tick = m === "on" || m === "dim";
    return html`<span class=${classMap({ cell: true, dim: m === "dim" })}>
      <input type="checkbox" aria-label=${name} .checked=${tick} .indeterminate=${m === "part"} />
      ${tick ? html`<svg viewBox="0 0 24 24" aria-hidden="true"><path d="M3 9L8 11L11 13L21 3V9L12 19H9Z" fill="#c01420"/></svg>` : nothing}
    </span>`;
  }

  private renderRow(r: Row, i: number) {
    const id = `row-${i}`;
    return html`<div class=${classMap({ row: true, strong: r.guides.length === 1 })}>
      ${r.guides.map((g) => html`<span class="guide ${g}">
        ${g === "open" ? html`<button class="toggle" aria-label="Collapse ${r.label}"></button>` : nothing}
        ${g === "shut" || g === "last" ? html`<button class="toggle plus" aria-label="Expand ${r.label}"></button>` : nothing}
      </span>`)}
      ${r.radio
        ? html`<input type="radio" name="pick" id=${id} class="radio ${r.radio}" .checked=${!!r.picked} /><label for=${id}>${r.label}</label>`
        : html`<label>${r.label}</label>`}
      ${r.swatch ? html`<span class="swatch ${r.swatch}-s"></span>` : nothing}
      ${this.renderMark(r.v, `${r.label} visible`)}${this.renderMark(r.s, `${r.label} selectable`)}
    </div>`;
  }

  private renderPanel() {
    return html`<section class="panel">
      <button class="allcolors">All Colors</button>
      <div class="frame">
        <div class="tree">
          <div class="thead"><button>V</button><button>S</button></div>
          ${ROWS.map((r, i) => this.renderRow(r, i))}
        </div>
        <div class="scroll">
          <button aria-label="Scroll up"><svg width="20" height="16" aria-hidden="true"><path d="M10 1L19 15H1Z" fill="#fff" stroke="#aaa"/></svg></button>
          <div class="grow"><div class="ribs"></div></div>
          <div class="rest"></div>
          <button aria-label="Scroll down"><svg width="20" height="16" aria-hidden="true"><path d="M10 15L19 1H1Z" fill="#eee" stroke="#aaa"/></svg></button>
        </div>
      </div>
      <div class="level">
        <label for="detail">Detail</label>
        <div class="slide">
          <input id="detail" type="range" min="0" max="4" .value=${String(this.detail)}
            @input=${(e: Event) => (this.detail = Number((e.target as HTMLInputElement).value))} />
          <div class="ticks"><i></i><i></i><i></i></div>
        </div>
        <span>Speed</span>
      </div>
    </section>`;
  }

  private renderNotes() {
    const lines = ["It can be useful to", 'run "Verify DRC" and', '"Verify Connectivity"', "in the GUI after", "power planning"];
    return html`<svg class="notes" aria-hidden="true">
      <text x="1596" y="102">Violation Browser</text>
      <ellipse cx="1552" cy="151" rx="52" ry="48" fill="none" stroke="#fc2a1c" stroke-width="11"/>
      <path d="M1314 137L1350 183L1298 193ZM1245 208L1282 252L1231 265Z"/>
      <path d="M1324 185L1405 565M1256 255L1333 571" stroke="#fc2a1c" stroke-width="10"/>
      ${lines.map((t, i) => svg`<text class="mid" x="1336" y=${631 + i * 47}>${t}</text>`)}
    </svg>`;
  }

  render() {
    return html`
      ${this.renderMenubar()}
      <div class="redline"></div>
      <div class="tabs">
        <button class="tab"><u>L</u>ayout</button>
        <button class="add" aria-label="Add tab">
          <svg viewBox="0 0 30 30" aria-hidden="true"><circle cx="15" cy="15" r="14" fill="#c44c50"/><path d="M15 8v14M8 15h14" stroke="#fff" stroke-width="4"/></svg>
        </button>
      </div>
      ${this.renderToolbars()}
      <main class="main">
        ${this.renderSide()}
        <div class="die">
          <svg class="plot" aria-label="Layout view">${dieDrawing()}</svg>
          <button class="palette" aria-label="Color palette">
            <svg viewBox="0 0 32 36" aria-hidden="true"><path fill="#b85058" d="M0 2h12v12H0Z"/><path fill="#389838" d="M20 2h12v12H20Z"/><path fill="#e8a038" d="M0 22h12v12H0Z"/><path fill="#5878b8" d="M20 22h12v12H20Z"/></svg>
          </button>
          <svg class="corner" viewBox="0 0 26 24" aria-hidden="true"><path d="M2 1H24L17 7L26 18L20 24L9 13L2 20Z" fill="#8cd020"/></svg>
        </div>
        ${this.renderPanel()}
      </main>
      <footer class="status">
        <button>Q</button>
        <button aria-label="Recent">${icon("clock")}</button>
        <div class="readout"><span>-2.35600, 50.36200</span><span class="sel">Sel: 0</span><span class="mem">In Memory</span></div>
      </footer>
      <svg class="sizer" viewBox="0 0 24 24" aria-hidden="true"><path d="M0 0H24V24H0Z" fill="#f0f0f0"/><path d="M4 24L24 4M12 24L24 12M20 24L24 20" stroke="#888" stroke-width="2"/></svg>
      ${this.renderNotes()}
    `;
  }
}
